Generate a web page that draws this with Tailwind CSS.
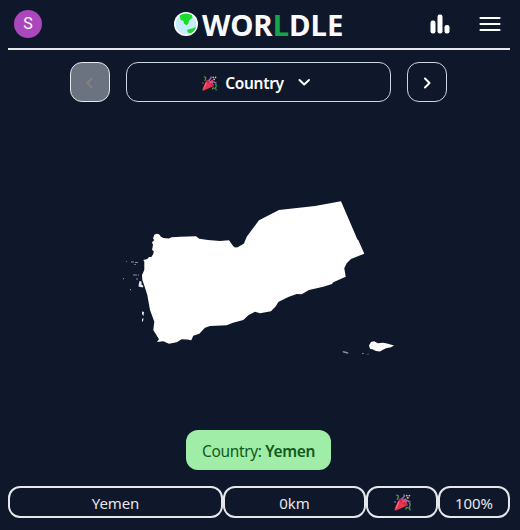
<!DOCTYPE html>
<html lang="en">
<head>
<meta charset="utf-8">
<title>Worldle</title>
<script src="https://cdn.jsdelivr.net/npm/@tailwindcss/browser@4"></script>
</head>
<body class="h-[530px] w-[520px] overflow-hidden bg-[#0f172a] font-['Noto_Sans',sans-serif] text-white">
<svg class="hidden">
  <symbol id="party" viewBox="0 0 32 32">
    <path d="M10 9 1 28q-1 4 3 3l22-10q-1-6-6-10t-10-2Z" fill="#ea3550"/>
    <path d="M10 9q4-1 9 5t7 8q-5 0-11-5T10 9Z" fill="#c9243f"/>
    <path d="m9 14-5 13" stroke="#ff6678" stroke-width="2.500"/>
    <path d="M4 2q5 0 4 4-1 2-2 5" stroke="#4f9b4a" stroke-width="2.500" fill="none"/>
    <path d="M16 12q-2-4 1-5t2-6" stroke="#8d68c2" stroke-width="3" fill="none"/>
    <path d="m16 16 7-7" stroke="#ff4260" stroke-width="4"/>
    <path d="M22 15q2-4 4-2t5 1" stroke="#8d68c2" stroke-width="3" fill="none"/>
    <path d="M22 29q1-5 4-3t4-4-2-4M30 27v4" stroke="#4f9b4a" stroke-width="2.500" fill="none"/>
    <g fill="#f4c542"><circle cx="24" cy="3" r="1.700"/><circle cx="29" cy="3" r="1.700"/><circle cx="26" cy="7" r="1.900"/></g>
    <circle cx="2" cy="15" r="1.600" fill="#8d68c2"/>
  </symbol>
</svg>
<header class="mx-2 flex h-[50px] w-[502px] items-center justify-between border-b-2 border-gray-200 pr-[9px] pl-1.5">
  <div class="flex w-[149px]"><div class="flex size-7 items-center justify-center rounded-full bg-[#ab47bc] font-[Roboto,sans-serif] text-base">S</div></div>
  <h1 class="flex w-[170px] items-center text-[29.400px] leading-9 font-bold tracking-[0px] text-gray-50">
    <svg class="mr-1 size-6 shrink-0" viewBox="0 0 24 24"><circle cx="12" cy="12" r="12" fill="#fff"/><circle cx="12" cy="12" r="10.400" fill="#c8ecff"/><path d="M5.500 3.800Q8.500 1.400 12.500 1.600q4 .4 5.900 1.900l-.2 2.400-3.100 2.600-.9 3.300-1.900 1.400-2.500-1.700-.3-2.500-2.800-.9Z" fill="#19dc29"/><path d="m13 17.700 5.300-1.200 3.800-1.700q-1.400 4.600-5.200 6.500l-3.100-.7Z" fill="#19dc29"/></svg>
    <span class="mt-0.5 block w-[142px] whitespace-nowrap">WOR<span class="text-[#16a34a]">L</span>DLE</span>
  </h1>
  <div class="flex w-[146px] items-center justify-end gap-[29px]">
    <svg class="h-5 w-5" viewBox="0 0 20 20" fill="#fff"><rect x="0.5" y="6.500" width="5" height="13" rx="2.200"/><rect x="7.500" y="0.500" width="5" height="19" rx="2.200"/><rect x="14.500" y="11" width="5" height="8.500" rx="2.200"/></svg>
    <svg class="h-5 w-[22px]" viewBox="0 0 22 20" stroke="#fff" stroke-width="2.200" stroke-linecap="round"><path d="M1.500 4h19M1.500 10h19M1.500 16h19"/></svg>
  </div>
</header>
<nav class="mx-[70px] mt-3 flex h-10 w-[377px] gap-4">
  <button class="flex w-10 shrink-0 items-center justify-center rounded-xl border border-gray-200 bg-[#6b7280]"><svg class="size-4" viewBox="0 0 16 16" fill="none" stroke="#84817d" stroke-width="2"><path d="m10 4-4.500 5 4.500 5"/></svg></button>
  <button class="flex w-[265px] shrink-0 items-center rounded-xl border border-slate-300 pl-[75px] font-semibold"><svg class="mt-0.5 mr-2 size-[15px]"><use href="#party"/></svg><span class="mt-[3px] w-[59px] text-[15.500px] tracking-[-0.300px]">Country</span><svg class="ml-[11px] size-4" viewBox="0 0 16 16" fill="none" stroke="#fff" stroke-width="2" stroke-linecap="round" stroke-linejoin="round"><path d="m4.500 6 4.700 4.500L14 6"/></svg></button>
  <button class="flex w-10 shrink-0 items-center justify-center rounded-xl border border-slate-300"><svg class="size-4" viewBox="0 0 16 16" fill="none" stroke="#fff" stroke-width="2" stroke-linecap="round" stroke-linejoin="round"><path d="m6 4.500 4.500 4.500L6 13.500"/></svg></button>
</nav>
<main class="flex h-[328px] items-center">
  <svg class="h-[328px] w-[520px]" viewBox="0 102 520 328" fill="#fff">
    <path d="M143.300 260 147.300 259 149 257 151.300 257 153.300 254 153.700 251 152 250 153 245 152 242.300 154.300 240 153 238.500 154.300 234.700 156.700 233.700 159 234.300 161 236.700 163.300 238 168.700 238.500 171.700 237.300 180.700 236.800 196 236.300 199.300 238.700 208 240 220 241 229 240.300 233.300 246.300 235 247.500 237.700 247.300 244 243.500 246.700 236.700 259 220.300 279 210 315 206 341 201.300 357.300 239.300 358.500 240.500 364.300 253.700 351 259 346.700 263.300 344.300 268.300 345.700 276.700 333.300 282.300 332 284 323.300 286.700 309 290 301.700 294.300 296.700 294 288.300 297 278.300 302 276 306 271 311.300 260 313.300 255 311.700 248.300 315.300 243.300 320 233 322.700 226.700 325.300 210 326 205 327.700 199.300 333.700 193.300 335.700 191.300 340.300 187.300 339.500 181.700 339.300 176.700 342.300 169 343.700 163.300 341.300 157 342 159 339.300 153.300 330 154.300 321.700 150 310 147.300 295 144.700 286.700 142.300 280 142 275 144.300 270 144.300 261.700Z"/>
    <path d="m369 345.500 2-3.500 3-.8 4 2 5-.5 4 .8 7 2-3 1.800-5 1-3 1.500-3 1.800-4-.5-3-1.500-3-.8Z"/>
    <path d="m139.500 281 2 .5v3l2 1.500-1 1.500-4-1 .3-2.500Zm2.500 30.500 2 .5-.5 4-1.500-2Zm0 7.500 1.500-1-.5 3.500h-1Z" fill="#e7eaee"/>
    <path d="m342.500 351 3 .5 3 1-.5 1.300-5-1.300ZM362 353h1.700v1H362Zm5.500.8h1v1h-1ZM131 261.500h3v1h-3Zm4 .5h3v1h-3Zm-1 2h2v.8h-2ZM126 261h1v.8h-1ZM123 278h1v1.300h-1Zm7 11h1v1.200h-1ZM133 274.500h4v1h-4Zm3 4h2v1h-2Zm2-4h1v1h-1Z" fill="#8a92a0"/>
  </svg>
</main>
<div class="ml-[186px] flex h-10 w-[145px] items-center justify-center rounded-xl bg-[#a0eda7] text-[15.500px] tracking-[-0.350px] whitespace-pre text-[#14591b]"><span class="mt-[3px] w-[113px]">Country: <b class="font-semibold">Yemen</b></span></div>
<section class="mx-2 mt-4 grid h-8 w-[502px] grid-cols-[215px_143px_72px_72px] text-[15px] tracking-[-0.100px] text-gray-200">
  <div class="flex items-center justify-center rounded-xl border-2 border-gray-200"><span class="mt-0.5">Yemen</span></div>
  <div class="flex items-center justify-center rounded-xl border-2 border-gray-200"><span class="mt-0.5">0km</span></div>
  <div class="flex items-center justify-center rounded-xl border-2 border-gray-200"><svg class="size-[17px]"><use href="#party"/></svg></div>
  <div class="flex items-center justify-center rounded-xl border-2 border-gray-200"><span class="mt-0.5">100%</span></div>
</section>
</body>
</html>
